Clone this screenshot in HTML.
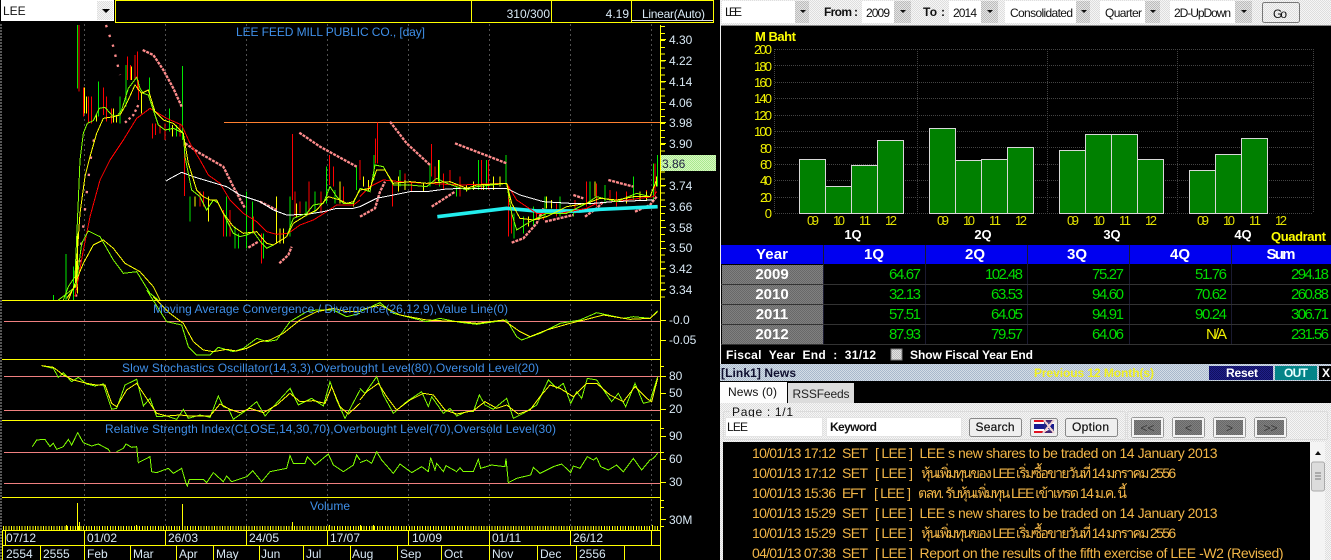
<!DOCTYPE html>
<html><head><meta charset="utf-8"><style>
html,body{margin:0;padding:0;background:#000;width:1331px;height:560px;overflow:hidden}
svg{display:block}
text{font-family:"Liberation Sans","Noto Sans CJK SC",sans-serif}
.ax{font-size:12px;fill:#d8e8f4}
.ti{font-size:12px;fill:#3f8fe8}
.yl{font-size:13px;fill:#f0f000}
.xl{font-size:13px;fill:#e0e000}
.hd{font-size:15px;font-weight:bold;fill:#fff;text-anchor:middle}
.nm{font-size:15px;fill:#00dc00;text-anchor:end}
.bk{font-size:12px;fill:#111}
.nw{font-size:14px;fill:#f2b648}
.btn{fill:#efefef;stroke:#888;stroke-width:1}
.nav{fill:url(#dg);stroke:#f4f4f4;stroke-width:2}
.navo{fill:none;stroke:#999;stroke-width:1}
</style></head><body>
<svg xmlns="http://www.w3.org/2000/svg" width="1331" height="560" viewBox="0 0 1331 560">
<defs>
<pattern id="lg" width="2" height="2" patternUnits="userSpaceOnUse"><rect width="2" height="2" fill="#f6f6f6"/><rect width="1" height="1" fill="#dedede"/><rect x="1" y="1" width="1" height="1" fill="#dedede"/></pattern>
<pattern id="mg" width="2" height="2" patternUnits="userSpaceOnUse"><rect width="2" height="2" fill="#e4e4e4"/><rect width="1" height="1" fill="#bcbcbc"/><rect x="1" y="1" width="1" height="1" fill="#bcbcbc"/></pattern>
<pattern id="dg" width="2" height="2" patternUnits="userSpaceOnUse"><rect width="2" height="2" fill="#808080"/><rect width="1" height="1" fill="#686868"/><rect x="1" y="1" width="1" height="1" fill="#686868"/></pattern>
<pattern id="bl" width="2" height="2" patternUnits="userSpaceOnUse"><rect width="2" height="2" fill="#d4dde6"/><rect width="1" height="1" fill="#a8b8cc"/><rect x="1" y="1" width="1" height="1" fill="#a8b8cc"/></pattern>
<pattern id="nv" width="2" height="2" patternUnits="userSpaceOnUse"><rect width="2" height="2" fill="#202088"/><rect width="1" height="1" fill="#101060"/><rect x="1" y="1" width="1" height="1" fill="#101060"/></pattern>
<pattern id="gn" width="2" height="2" patternUnits="userSpaceOnUse"><rect width="2" height="2" fill="#d8f8c0"/><rect width="1" height="1" fill="#a8e890"/><rect x="1" y="1" width="1" height="1" fill="#a8e890"/></pattern>
</defs>
<rect width="1331" height="560" fill="#000"/>

<!-- LEFT: top bar -->
<rect x="1" y="0" width="113" height="21" fill="#fff"/>
<rect x="97" y="1" width="16" height="19" fill="url(#lg)"/>
<path d="M102 9h8l-4 4z" fill="#000"/>
<text x="3" y="15" font-size="12" fill="#111">LEE</text>
<rect x="115.5" y="0.5" width="598" height="22" fill="none" stroke="#ffff00"/>
<path d="M471.5 0V22M551.5 0V22M631.5 0V22" stroke="#ffff00"/>
<path d="M632 20.5H713" stroke="#ddd"/>
<text x="550" y="18" class="ax" text-anchor="end">310/300</text>
<text x="629" y="18" class="ax" text-anchor="end">4.19</text>
<text x="642" y="18" class="ax" textLength="63">Linear(Auto)</text>

<!-- grid -->
<path d="M1 24V560" stroke="#555" stroke-dasharray="2 1" stroke-width="2"/>
<path d="M84.5 24V527M165.5 24V527M246.5 24V527M327.5 24V527M408.5 24V527M489.5 24V527M570.5 24V527M651.5 24V527" stroke="#505050" stroke-dasharray="2 3"/>

<!-- horizontal levels -->
<g shape-rendering="crispEdges">
<path d="M4 321.5H660M4 376.5H660M4 410.5H660M4 452.5H660M4 483.5H660" stroke="#f08080"/>
<path d="M224 122.5H660" stroke="#ff8030"/>
<path d="M2 300.5H660M2 359.5H660M2 420.5H660M2 497.5H660" stroke="#ffff00"/>
</g>

<!-- candles left half -->
<g transform="scale(.33333)" shape-rendering="crispEdges" stroke-width="3" fill="none">
<path stroke="#00e800" d="M232 75V265M198 762V900M160 885V900M220 800V900M295 245V350M360 290V370M378 195V320M448 232V290M508 325V395M547 198V420M530 375V410M570 590V665M680 590V710M705 680V745M715 700V745M740 575V745M757 605V700M790 700V775M870 590V710M918 605V650M945 575V640M980 500V610M1005 570V610M1070 500V570"/>
<path stroke="#ff0000" d="M237 75V275M250 262V350M265 290V370M275 290V370M310 262V345M320 290V365M335 325V370M382 170V240M392 195V240M405 165V240M413 155V270M415 240V300M458 370V415M467 370V405M480 375V400M495 370V420M540 370V410M553 430V588M600 575V620M610 575V620M670 630V710M690 630V710M760 650V700M785 700V790M878 402V600M885 575V650M900 605V640M927 545V640M963 575V640M988 465V555M1000 500V560M1030 560V610"/>
<path stroke="#ffff00" d="M232 700V880M229 800V870M254 262V340M260 290V340M290 345V365M425 280V340M395 200V240M340 325V368M350 345V368M518 375V410M585 590V620M625 590V665M830 590V730M840 685V730M850 685V730M890 610V650M1020 545V610M1060 605V620"/>
</g>
<!-- candles right half -->
<g transform="translate(360 0) scale(.33333)" shape-rendering="crispEdges" stroke-width="3" fill="none">
<path stroke="#ff0000" d="M0 480V540M52 367V490M47 415V490M98 540V620M135 520V560M155 545V575M215 432V530M225 500V550M250 520V570M270 510V550M300 530V590M365 480V570M385 480V570M445 560V710M455 620V700M530 630V660M550 650V660M590 610V650M645 600V640M680 545V620M710 550V620M750 570V600M770 575V620M800 575V610M860 570V600M885 490V590"/>
<path stroke="#00e800" d="M42 465V540M120 510V560M210 490V560M238 480V560M290 560V590M355 480V570M380 480V570M438 465V555M462 640V715M490 650V700M520 620V680M555 590V650M600 590V650M640 630V650M690 545V615M735 555V610M820 530V600M880 490V600M893 465V560"/>
<path stroke="#ffff00" d="M10 530V560M25 540V575M115 530V575M135 540V570M190 550V575M235 480V545M320 555V575M340 545V570M370 550V570M400 530V570M420 530V560M505 650V680M560 590V625M575 600V625M705 545V590M800 590V610M840 575V600M860 575V600M890 530V560"/>
</g>

<!-- pink SAR dots -->
<g transform="scale(.33333)" fill="none" stroke="#ff8c8c" stroke-width="7" stroke-dasharray="9 3">
<polyline stroke-dasharray="7 24" points="318,75 340,140 360,225"/>
<polyline stroke-dasharray="7 45" points="228,890 245,720 252,660 258,595 265,540 270,490 278,440 285,400"/>
<polyline stroke-dasharray="7 8" points="375,368 400,345 415,315"/>
<polyline points="428,150 460,165 490,210 520,265 545,320"/>
<polyline points="555,430 600,460 670,500 700,560 735,625"/>
<polyline points="780,605 830,630"/>
<polyline points="745,743 775,725"/>
<polyline points="838,790 865,765 875,740"/>
<polyline points="898,398 960,440 1070,500"/>
</g>
<g transform="translate(360 0) scale(.33333)" fill="none" stroke="#ff8c8c" stroke-width="7" stroke-dasharray="9 3">
<polyline points="0,650 45,625 60,575 75,545"/>
<polyline points="90,365 140,430 210,495"/>
<polyline points="215,620 285,575"/>
<polyline points="285,430 440,490"/>
<polyline points="455,728 490,715 530,670 550,625"/>
<polyline points="555,665 640,645"/>
<polyline points="640,585 670,595"/>
<polyline points="675,650 710,625 730,605"/>
<polyline points="745,540 820,560"/>
<polyline points="825,635 870,615 890,590"/>
<polyline stroke="#22eeee" stroke-width="11" stroke-dasharray="none" points="232,650 440,625 530,633 660,633 720,628 893,620"/>
</g>

<!-- MAs + MACD top -->
<g transform="scale(.33333)" fill="none" stroke-width="3" shape-rendering="crispEdges">
<polyline stroke="#ff0000" points="225,890 250,750 270,650 300,540 330,480 370,420 410,355 450,325 500,355 545,375 570,430 600,480 625,525 660,550 690,600 730,640 770,665 800,695 830,703 865,700 900,675 940,660 980,635 1010,615 1060,615 1080,600"/>
<polyline stroke="#ffffff" points="498,543 515,533 545,517 580,530 640,548 680,560 720,585 780,605 820,630 860,645 920,643 970,635 1010,625 1060,625 1080,620"/>
<polyline stroke="#80ff00" points="190,900 205,860 225,830 235,600 240,480 250,400 262,370 280,362 298,325 315,322 335,345 350,350 365,330 385,265 410,232 420,265 430,280 445,285 460,330 475,375 495,390 520,385 550,400 555,470 575,570 600,590 620,630 640,600 655,610 680,660 700,700 720,710 740,705 760,695 785,730 800,745 820,735 860,710 880,655 920,640 940,615 970,610 990,560 1010,590 1030,610 1060,610 1080,565"/>
<polyline stroke="#ffff00" points="200,895 225,860 240,640 255,530 270,470 290,400 310,355 340,350 360,345 380,310 405,255 425,280 445,270 465,335 490,360 520,370 550,400 565,490 590,570 610,590 630,600 650,600 670,640 700,680 730,700 770,695 800,730 820,735 860,710 880,670 920,645 950,630 985,590 1020,600 1040,610 1060,605 1080,570"/>
<polyline stroke="#80ff00" points="175,900 228,860 245,730 265,693 300,710 340,780 370,820 410,815 450,880 475,900"/>
<polyline stroke="#ffff00" points="205,900 250,790 280,735 310,720 340,745 375,790 420,815 460,860 480,900"/>
</g>
<g transform="translate(360 0) scale(.33333)" fill="none" stroke-width="3" shape-rendering="crispEdges">
<polyline stroke="#ff0000" points="0,590 30,560 70,540 120,545 200,550 300,555 440,550 470,600 530,640 600,640 680,625 710,610 800,600 880,590 890,575"/>
<polyline stroke="#ffffff" points="0,620 50,595 100,585 150,575 200,575 250,568 300,565 440,565 480,585 550,605 630,610 700,610 760,605 880,600"/>
<polyline stroke="#80ff00" points="0,565 30,575 45,495 70,500 100,555 150,555 200,560 230,535 260,550 320,570 350,560 440,550 455,640 470,690 510,665 560,640 620,640 680,610 710,590 770,605 830,580 870,590 890,540"/>
<polyline stroke="#ffff00" points="0,570 30,565 50,510 75,510 100,550 150,545 200,550 270,545 320,565 350,555 440,550 455,610 480,655 520,660 560,650 620,620 680,610 720,595 770,600 820,590 870,590 890,540"/>
</g>

<!-- oscillators left -->
<g transform="translate(0 290) scale(.33333)" fill="none" stroke-width="3" shape-rendering="crispEdges">
<polyline stroke="#80ff00" points="440,0 500,95 545,105 565,170 590,195 630,195 655,172 700,185 730,175 770,145 800,155 830,150 870,95 920,65 950,60 1000,60 1040,80 1080,70"/>
<polyline stroke="#ffff00" points="460,20 510,70 550,100 580,155 610,180 640,185 680,178 710,183 740,175 780,155 810,150 850,130 900,90 950,65 1000,55 1040,65 1080,65"/>
<polyline stroke="#80ff00" points="125,227 160,235 175,262 190,248 215,275 235,262 260,282 285,288 310,282 335,358 350,355 375,285 410,268 430,348 450,325 470,380 500,378 530,388 550,358 565,385 600,375 630,382 655,318 670,350 685,355 700,388 740,360 770,335 795,378 820,350 870,295 895,345 935,325 970,348 990,275 1010,330 1035,385 1080,300"/>
<polyline stroke="#ffff00" points="125,227 160,232 190,255 220,270 260,280 290,285 315,285 335,340 350,350 380,300 410,280 440,325 470,370 500,378 540,375 570,378 630,378 660,342 690,358 720,368 750,355 790,368 830,345 870,310 900,335 940,332 975,340 995,290 1020,350 1045,372 1080,340"/>
<polyline stroke="#80ff00" points="97,470 110,450 135,448 150,470 160,460 170,478 190,470 205,448 215,465 233,428 250,458 275,468 295,462 325,478 330,485"/>
<polyline stroke="#80ff00" points="350,485 370,475 378,462 395,472 410,470 415,518 450,500 455,545 470,548 505,535 520,550 545,535 558,580 562,588 568,568 610,568 620,578 640,548 670,575 680,558 695,575 740,560 758,542 785,575 810,545 860,535 870,497 880,520 915,520 922,500 945,525 985,492 1000,525 1030,545 1060,525 1070,495 1080,510"/>
</g>
<!-- oscillators right -->
<g transform="translate(360 290) scale(.33333)" fill="none" stroke-width="3" shape-rendering="crispEdges">
<polyline stroke="#80ff00" points="0,65 60,38 100,70 160,85 200,95 240,85 300,97 350,103 440,90 470,140 485,150 540,130 600,100 660,90 710,68 790,85 820,80 870,85 893,62"/>
<polyline stroke="#ffff00" points="0,60 60,45 120,75 200,90 300,95 350,100 430,90 480,125 510,140 560,120 630,100 680,88 730,75 810,88 870,85 893,65"/>
<polyline stroke="#80ff00" points="0,295 15,310 50,260 70,315 100,370 140,335 185,305 205,350 215,320 250,370 270,355 290,378 320,365 340,365 358,315 375,345 400,358 440,325 460,385 490,370 530,345 565,270 590,295 610,280 632,340 650,305 665,325 682,265 710,270 755,335 775,310 797,350 825,280 850,340 870,335 893,260"/>
<polyline stroke="#ffff00" points="0,330 20,305 55,280 80,320 110,360 150,330 190,310 220,315 255,360 290,372 340,362 375,335 410,355 440,345 475,372 510,360 540,320 570,285 600,295 640,320 680,280 710,280 750,315 790,335 825,290 860,325 875,335 893,265"/>
<polyline stroke="#80ff00" points="0,518 20,510 35,520 50,485 65,510 100,550 120,522 155,548 185,530 205,545 212,503 225,540 230,520 250,545 258,527 290,545 300,533 310,545 340,545 355,508 362,535 395,525 435,530 438,505 445,578 470,565 512,555 520,532 540,550 580,530 605,522 632,548 640,528 660,535 682,500 700,510 710,503 722,530 745,540 770,525 790,545 820,505 845,540 870,510 880,505 893,490"/>
</g>

<!-- labels -->
<text x="236" y="36" class="ti" textLength="189">LEE FEED MILL PUBLIC CO., [day]</text>
<text x="153" y="313" class="ti" textLength="355">Moving Average Convergence / Divergence(26,12,9),Value Line(0)</text>
<text x="122" y="372" class="ti" textLength="417">Slow Stochastics Oscillator(14,3,3),Overbought Level(80),Oversold Level(20)</text>
<text x="105" y="433" class="ti" textLength="451">Relative Strength Index(CLOSE,14,30,70),Overbought Level(70),Oversold Level(30)</text>
<text x="310" y="510" class="ti" textLength="40">Volume</text>

<!-- volume -->
<g shape-rendering="crispEdges">
<path d="M3 528H660" stroke="#ffff00" stroke-width="4" stroke-dasharray="1 1.67"/>
<path d="M77.5 503V530M182.5 504V530M79.5 522V530M66.5 525V530M292.5 522V530M329.5 525V530M136.5 525V530M652.5 525V530M373.5 525V530M360.5 525V530" stroke="#ffff00"/>
<!-- axis -->
<path d="M660.5 25V560" stroke="#ffff00"/>
<path d="M662.5 26V300" stroke="#ffff00" stroke-width="5" stroke-dasharray="1 5.93"/>
<path d="M660 39.5H666M660 60.5H666M660 81.5H666M660 102.5H666M660 122.5H666M660 143.5H666M660 185.5H666M660 206.5H666M660 227.5H666M660 248.5H666M660 268.5H666M660 289.5H666M660 320.5H666M660 340.5H666M660 366.5H664M660 376.5H666M660 393.5H666M660 409.5H666M660 428.5H664M660 436.5H666M660 452.5H664M660 459.5H666M660 482.5H666M660 500.5H664M660 507.5H664M660 519.5H666M660 526.5H664" stroke="#ffff00"/>
<!-- date rows -->
<path d="M2 530.5H660M2 545.5H660" stroke="#ffff00"/>
<path d="M2.5 530V560M5.5 530V545M84.5 530V560M165.5 530V545M246.5 530V545M327.5 530V545M408.5 530V545M489.5 530V560M570.5 530V545M651.5 530V545M40.5 545V560M130.5 545V560M176.5 545V560M213.5 545V560M259.5 545V560M303.5 545V560M350.5 545V560M397.5 545V560M441.5 545V560M537.5 545V560M576.5 545V560M624.5 545V560" stroke="#ffff00"/>
</g>
<g class="ax">
<text class="ax" x="669" y="44">4.30</text><text class="ax" x="669" y="65">4.22</text><text class="ax" x="669" y="86">4.14</text><text class="ax" x="669" y="107">4.06</text><text class="ax" x="669" y="127">3.98</text><text class="ax" x="669" y="148">3.90</text><text class="ax" x="669" y="190">3.74</text><text class="ax" x="669" y="211">3.66</text><text class="ax" x="669" y="232">3.58</text><text class="ax" x="669" y="252">3.50</text><text class="ax" x="669" y="273">3.42</text><text class="ax" x="669" y="294">3.34</text>
<text class="ax" x="669" y="324">-0.0</text><text class="ax" x="669" y="344">-0.05</text>
<text class="ax" x="669" y="380">80</text><text class="ax" x="669" y="397">50</text><text class="ax" x="669" y="413">20</text>
<text class="ax" x="669" y="440">90</text><text class="ax" x="669" y="463">60</text><text class="ax" x="669" y="486">30</text><text class="ax" x="669" y="524">30M</text>
<text class="ax" x="6" y="542">07/12</text><text class="ax" x="87" y="542">01/02</text><text class="ax" x="168" y="542">26/03</text><text class="ax" x="249" y="542">24/05</text><text class="ax" x="330" y="542">17/07</text><text class="ax" x="412" y="542">10/09</text><text class="ax" x="492" y="542">01/11</text><text class="ax" x="573" y="542">26/12</text>
<text class="ax" x="6" y="558">2554</text><text class="ax" x="43" y="558">2555</text><text class="ax" x="87" y="558">Feb</text><text class="ax" x="133" y="558">Mar</text><text class="ax" x="179" y="558">Apr</text><text class="ax" x="216" y="558">May</text><text class="ax" x="261" y="558">Jun</text><text class="ax" x="306" y="558">Jul</text><text class="ax" x="352" y="558">Aug</text><text class="ax" x="400" y="558">Sep</text><text class="ax" x="444" y="558">Oct</text><text class="ax" x="492" y="558">Nov</text><text class="ax" x="540" y="558">Dec</text><text class="ax" x="579" y="558">2556</text>
</g>
<rect x="661" y="155" width="55" height="16" fill="url(#gn)"/>
<text x="662" y="168" font-size="12" fill="#224">3.86</text>

<!-- RIGHT: header -->
<rect x="720" y="0" width="611" height="25" fill="url(#lg)"/>
<rect x="720" y="25" width="611" height="1" fill="#888"/>
<rect x="720" y="0" width="1" height="560" fill="#f0f0f0"/>
<rect x="722" y="1" width="73" height="22" fill="#fff"/>
<rect x="862" y="1" width="32" height="22" fill="#fff"/>
<rect x="949" y="1" width="32" height="22" fill="#fff"/>
<rect x="1005" y="1" width="71" height="22" fill="#fff"/>
<rect x="1100" y="1" width="45" height="22" fill="#fff"/>
<rect x="1170" y="1" width="65" height="22" fill="#fff"/>
<g fill="url(#mg)"><rect x="795" y="1" width="14" height="22"/><rect x="894" y="1" width="17" height="22"/><rect x="981" y="1" width="17" height="22"/><rect x="1076" y="1" width="14" height="22"/><rect x="1145" y="1" width="15" height="22"/><rect x="1235" y="1" width="17" height="22"/></g>
<path d="M800 10h6l-3 3zM900 10h6l-3 3zM987 10h6l-3 3zM1081 10h6l-3 3zM1150 10h6l-3 3zM1241 10h6l-3 3z" fill="#111"/>
<text x="725" y="16" class="bk" textLength="17">LEE</text>
<text x="824" y="16" class="bk" font-weight="bold" textLength="34">From :</text>
<text x="866" y="17" class="bk" textLength="24">2009</text>
<text x="923" y="16" class="bk" font-weight="bold" textLength="22">To :</text>
<text x="953" y="17" class="bk" textLength="24">2014</text>
<text x="1010" y="17" class="bk" textLength="63">Consolidated</text>
<text x="1105" y="17" class="bk" textLength="37">Quarter</text>
<text x="1174" y="17" class="bk" textLength="57">2D-UpDown</text>
<rect x="1262.5" y="2.5" width="37" height="20" rx="2" fill="url(#lg)" stroke="#777"/>
<text x="1273" y="18" class="bk" textLength="14">Go</text>

<!-- bar chart -->
<text x="755" y="41" font-size="13" font-weight="bold" fill="#ffff00" textLength="41">M Baht</text>
<g stroke="#444" stroke-dasharray="1 1" shape-rendering="crispEdges">
<path d="M775 49.5H1313M775 65.5H1313M775 82.5H1313M775 98.5H1313M775 115.5H1313M775 131.5H1313M775 147.5H1313M775 164.5H1313M775 180.5H1313M775 197.5H1313M775 213.5H1313"/>
<path d="M774.5 49V213M917.5 49V213M1047.5 49V213M1177.5 49V213M1313.5 49V213"/>
</g>
<g class="yl" text-anchor="end">
<text class="yl" x="772" y="54" text-anchor="end" textLength="18">200</text><text class="yl" x="772" y="71" text-anchor="end" textLength="18">180</text><text class="yl" x="772" y="87" text-anchor="end" textLength="18">160</text><text class="yl" x="772" y="103" text-anchor="end" textLength="18">140</text><text class="yl" x="772" y="120" text-anchor="end" textLength="18">120</text><text class="yl" x="772" y="136" text-anchor="end" textLength="18">100</text><text class="yl" x="772" y="153" text-anchor="end" textLength="12">80</text><text class="yl" x="772" y="169" text-anchor="end" textLength="12">60</text><text class="yl" x="772" y="185" text-anchor="end" textLength="12">40</text><text class="yl" x="772" y="202" text-anchor="end" textLength="12">20</text><text class="yl" x="772" y="218" text-anchor="end" textLength="6">0</text>
</g>
<g fill="#008000" stroke="#d8d8d8" shape-rendering="crispEdges">
<rect x="799.5" y="159.5" width="26" height="54"/><rect x="825.5" y="186.5" width="26" height="27"/><rect x="851.5" y="165.5" width="26" height="48"/><rect x="877.5" y="140.5" width="26" height="73"/>
<rect x="929.5" y="128.5" width="26" height="85"/><rect x="955.5" y="160.5" width="26" height="53"/><rect x="981.5" y="159.5" width="26" height="54"/><rect x="1007.5" y="147.5" width="26" height="66"/>
<rect x="1059.5" y="150.5" width="26" height="63"/><rect x="1085.5" y="134.5" width="26" height="79"/><rect x="1111.5" y="134.5" width="26" height="79"/><rect x="1137.5" y="159.5" width="26" height="54"/>
<rect x="1189.5" y="170.5" width="26" height="43"/><rect x="1215.5" y="154.5" width="26" height="59"/><rect x="1241.5" y="138.5" width="26" height="75"/>
</g>
<g text-anchor="middle">
<text class="xl" x="813" y="225" text-anchor="middle" textLength="12">09</text><text class="xl" x="839" y="225" text-anchor="middle" textLength="12">10</text><text class="xl" x="865" y="225" text-anchor="middle" textLength="12">11</text><text class="xl" x="891" y="225" text-anchor="middle" textLength="12">12</text>
<text class="xl" x="943" y="225" text-anchor="middle" textLength="12">09</text><text class="xl" x="969" y="225" text-anchor="middle" textLength="12">10</text><text class="xl" x="995" y="225" text-anchor="middle" textLength="12">11</text><text class="xl" x="1021" y="225" text-anchor="middle" textLength="12">12</text>
<text class="xl" x="1073" y="225" text-anchor="middle" textLength="12">09</text><text class="xl" x="1099" y="225" text-anchor="middle" textLength="12">10</text><text class="xl" x="1125" y="225" text-anchor="middle" textLength="12">11</text><text class="xl" x="1151" y="225" text-anchor="middle" textLength="12">12</text>
<text class="xl" x="1203" y="225" text-anchor="middle" textLength="12">09</text><text class="xl" x="1229" y="225" text-anchor="middle" textLength="12">10</text><text class="xl" x="1255" y="225" text-anchor="middle" textLength="12">11</text><text class="xl" x="1281" y="225" text-anchor="middle" textLength="12">12</text>
</g>
<g font-size="13" font-weight="bold" fill="#fff" text-anchor="middle">
<text x="853" y="239">1Q</text><text x="983" y="239">2Q</text><text x="1112" y="239">3Q</text><text x="1243" y="239">4Q</text>
</g>
<text x="1271" y="241" font-size="13" font-weight="bold" fill="#ffff00" textLength="55">Quadrant</text>

<!-- table -->
<rect x="721" y="245" width="610" height="19" fill="#0000f0"/>
<g fill="url(#dg)"><rect x="722" y="265" width="101" height="19"/><rect x="722" y="285" width="101" height="19"/><rect x="722" y="305" width="101" height="19"/><rect x="722" y="325" width="101" height="19"/></g>
<path d="M823.5 245V345M925.5 245V345M1027.5 245V345M1129.5 245V345M1231.5 245V345" stroke="#1a1a30" shape-rendering="crispEdges"/>
<path d="M721 284.5H1331M721 304.5H1331M721 324.5H1331M721 344.5H1331" stroke="#333" shape-rendering="crispEdges"/>
<text class="hd" x="772" y="259" textLength="32">Year</text><text class="hd" x="874" y="259">1Q</text><text class="hd" x="975" y="259">2Q</text><text class="hd" x="1077" y="259">3Q</text><text class="hd" x="1180" y="259">4Q</text><text class="hd" x="1281" y="259" textLength="29">Sum</text>
<text class="hd" x="772" y="279">2009</text><text class="hd" x="772" y="299">2010</text><text class="hd" x="772" y="319">2011</text><text class="hd" x="772" y="339">2012</text>
<text class="nm" x="921" y="279" textLength="32">64.67</text><text class="nm" x="1023" y="279" textLength="38">102.48</text><text class="nm" x="1124" y="279" textLength="32">75.27</text><text class="nm" x="1227" y="279" textLength="32">51.76</text><text class="nm" x="1329" y="279" textLength="38">294.18</text>
<text class="nm" x="921" y="299" textLength="32">32.13</text><text class="nm" x="1023" y="299" textLength="32">63.53</text><text class="nm" x="1124" y="299" textLength="32">94.60</text><text class="nm" x="1227" y="299" textLength="32">70.62</text><text class="nm" x="1329" y="299" textLength="38">260.88</text>
<text class="nm" x="921" y="319" textLength="32">57.51</text><text class="nm" x="1023" y="319" textLength="32">64.05</text><text class="nm" x="1124" y="319" textLength="32">94.91</text><text class="nm" x="1227" y="319" textLength="32">90.24</text><text class="nm" x="1329" y="319" textLength="38">306.71</text>
<text class="nm" x="921" y="339" textLength="32">87.93</text><text class="nm" x="1023" y="339" textLength="32">79.57</text><text class="nm" x="1124" y="339" textLength="32">64.06</text><text class="nm" x="1227" y="339" textLength="21" style="fill:#f0f000">N/A</text><text class="nm" x="1329" y="339" textLength="38">231.56</text>

<!-- fiscal -->
<text x="726" y="359" font-size="12" font-weight="bold" fill="#fff" textLength="150" xml:space="preserve">Fiscal  Year  End  :  31/12</text>
<rect x="891" y="349" width="11" height="11" fill="url(#mg)" stroke="#777"/>
<text x="910" y="359" font-size="12" font-weight="bold" fill="#fff" textLength="123">Show Fiscal Year End</text>

<!-- news header -->
<rect x="720" y="364" width="611" height="17" fill="url(#bl)"/>
<text x="721" y="377" font-size="12" font-weight="bold" fill="#101030" textLength="75">[Link1] News</text>
<text x="1034" y="377" font-size="12" font-weight="bold" fill="#f0f020" textLength="120">Previous 12 Month(s)</text>
<rect x="1209" y="366" width="64" height="14" fill="url(#nv)"/>
<text x="1226" y="377" font-size="12" font-weight="bold" fill="#fff" textLength="32">Reset</text>
<rect x="1275" y="366" width="42" height="14" fill="#048488"/>
<text x="1284" y="377" font-size="12" font-weight="bold" fill="#e8ffff" textLength="24">OUT</text>
<rect x="1319" y="366" width="12" height="14" fill="#000"/>
<text x="1322" y="377" font-size="12" font-weight="bold" fill="#fff">X</text>

<!-- tabs -->
<rect x="720" y="381" width="611" height="22" fill="#000"/>
<rect x="720" y="382" width="67" height="22" fill="#fdfdfd"/>
<text x="728" y="396" font-size="12" fill="#111" textLength="49">News (0)</text>
<rect x="788" y="383" width="66" height="21" fill="#dcdcdc"/>
<text x="792.5" y="398" font-size="12" fill="#222" textLength="57">RSSFeeds</text>

<!-- controls panel -->
<rect x="720" y="403" width="611" height="157" fill="url(#lg)"/>
<rect x="723.5" y="411.5" width="402" height="28" rx="2" fill="none" stroke="#dcdcdc"/>
<rect x="1127.5" y="411.5" width="200" height="28" rx="2" fill="none" stroke="#dcdcdc"/>
<rect x="730" y="406" width="66" height="11" fill="url(#lg)"/>
<text x="732" y="416" font-size="12" fill="#111" textLength="61">Page : 1/1</text>
<rect x="725.5" y="417.5" width="97" height="19" fill="#fff" stroke="#e4e4e4"/>
<text x="727" y="431" font-size="12" fill="#111" textLength="21">LEE</text>
<rect x="826.5" y="417.5" width="135" height="19" fill="#fff" stroke="#e4e4e4"/>
<text x="830" y="431" font-size="12" font-weight="bold" fill="#111" textLength="47">Keyword</text>
<rect class="btn" x="969.5" y="418.5" width="52" height="18" rx="2"/>
<text x="975.5" y="431" font-size="12" fill="#111" textLength="39" stroke="#111" stroke-width=".2">Search</text>
<rect class="btn" x="1030.5" y="418.5" width="27" height="18" rx="2"/>
<g shape-rendering="crispEdges">
<rect x="1034" y="420" width="20" height="13" fill="#e01020"/><rect x="1034" y="422" width="20" height="9" fill="#fff"/><rect x="1034" y="424" width="20" height="5" fill="#1a1a90"/>
<path d="M1054 420L1042 433H1054Z M1044 420L1054 420L1054 426L1044 433" fill="#2a2a80" opacity=".85"/>
<path d="M1043 433L1054 420M1044 420L1054 433" stroke="#f0d0d0" stroke-width="2"/>
</g>
<rect class="btn" x="1065.5" y="418.5" width="52" height="18" rx="2"/>
<text x="1072" y="431" font-size="12" fill="#111" textLength="37" stroke="#111" stroke-width=".2">Option</text>
<g>
<rect class="navo" x="1131.5" y="417.5" width="32" height="20" rx="2"/><rect class="nav" x="1133" y="419" width="29" height="17"/>
<rect class="navo" x="1172.5" y="417.5" width="32" height="20" rx="2"/><rect class="nav" x="1174" y="419" width="29" height="17"/>
<rect class="navo" x="1213.5" y="417.5" width="32" height="20" rx="2"/><rect class="nav" x="1215" y="419" width="29" height="17"/>
<rect class="navo" x="1254.5" y="417.5" width="32" height="20" rx="2"/><rect class="nav" x="1256" y="419" width="29" height="17"/>
</g>
<g font-size="12" fill="#3a3a3a" text-anchor="middle">
<text x="1147.5" y="432">&lt;&lt;</text><text x="1188.5" y="432">&lt;</text><text x="1229.5" y="432">&gt;</text><text x="1270.5" y="432">&gt;&gt;</text>
</g>

<!-- news list -->
<rect x="723" y="442" width="587" height="118" fill="#000"/>
<rect x="1310" y="442" width="15" height="118" fill="#f4f4f4"/>
<path d="M1315 455l3-4 3 4z" fill="#111"/>
<rect x="1311.5" y="462" width="13" height="29" rx="2" fill="#dcdcdc" stroke="#aaa"/>
<path d="M1315 473h6M1315 476h6M1315 479h6" stroke="#777"/>
<g class="nw">
<text class="nw" x="752" y="458" textLength="84">10/01/13 17:12</text><text class="nw" x="842" y="458" textLength="26">SET</text><text class="nw" x="875" y="458" textLength="38">[ LEE ]</text><text class="nw" x="919.5" y="458" textLength="298">LEE s new shares to be traded on 14 January 2013</text>
<text class="nw" x="752" y="478" textLength="84">10/01/13 17:12</text><text class="nw" x="842" y="478" textLength="26">SET</text><text class="nw" x="875" y="478" textLength="38">[ LEE ]</text><text class="nw" x="919.5" y="478" textLength="255">หุ้นเพิ่มทุนของ LEE เริ่มซื้อขายวันที่ 14 มกราคม 2556</text>
<text class="nw" x="752" y="498" textLength="84">10/01/13 15:36</text><text class="nw" x="842" y="498" textLength="24">EFT</text><text class="nw" x="874" y="498" textLength="37">[ LEE ]</text><text class="nw" x="918" y="498" textLength="209">ตลท. รับหุ้นเพิ่มทุน LEE เข้าเทรด 14 ม.ค. นี้</text>
<text class="nw" x="752" y="518" textLength="84">10/01/13 15:29</text><text class="nw" x="842" y="518" textLength="26">SET</text><text class="nw" x="875" y="518" textLength="38">[ LEE ]</text><text class="nw" x="919.5" y="518" textLength="298">LEE s new shares to be traded on 14 January 2013</text>
<text class="nw" x="752" y="538" textLength="84">10/01/13 15:29</text><text class="nw" x="842" y="538" textLength="26">SET</text><text class="nw" x="875" y="538" textLength="38">[ LEE ]</text><text class="nw" x="919.5" y="538" textLength="255">หุ้นเพิ่มทุนของ LEE เริ่มซื้อขายวันที่ 14 มกราคม 2556</text>
<text class="nw" x="752" y="558" textLength="84">04/01/13 07:38</text><text class="nw" x="842" y="558" textLength="26">SET</text><text class="nw" x="875" y="558" textLength="38">[ LEE ]</text><text class="nw" x="919.5" y="558" textLength="364">Report on the results of the fifth exercise of LEE -W2 (Revised)</text>
</g>
</svg>
</body></html>
